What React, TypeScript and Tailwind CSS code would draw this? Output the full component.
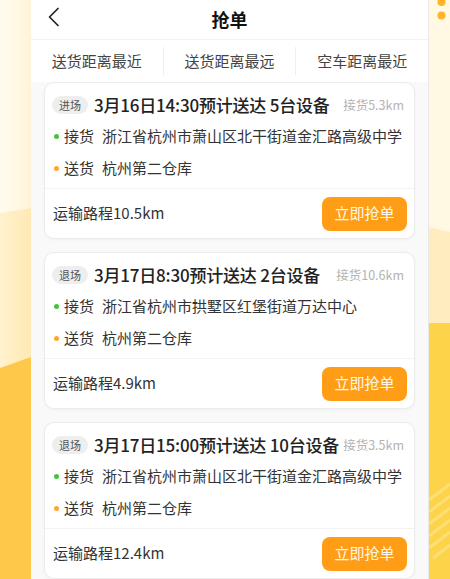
import React from 'react';

interface Order {
  tag: string;
  title: string;
  pickupDistance: string;
  pickup: string;
  dropoff: string;
  route: string;
}

const ORDERS: Order[] = [
  {
    tag: '进场',
    title: '3月16日14:30预计送达 5台设备',
    pickupDistance: '接货5.3km',
    pickup: '浙江省杭州市萧山区北干街道金汇路高级中学',
    dropoff: '杭州第二仓库',
    route: '运输路程10.5km',
  },
  {
    tag: '退场',
    title: '3月17日8:30预计送达 2台设备',
    pickupDistance: '接货10.6km',
    pickup: '浙江省杭州市拱墅区红堡街道万达中心',
    dropoff: '杭州第二仓库',
    route: '运输路程4.9km',
  },
  {
    tag: '退场',
    title: '3月17日15:00预计送达 10台设备',
    pickupDistance: '接货3.5km',
    pickup: '浙江省杭州市萧山区北干街道金汇路高级中学',
    dropoff: '杭州第二仓库',
    route: '运输路程12.4km',
  },
];

const TABS = ['送货距离最近', '送货距离最远', '空车距离最近'];

function LeftDecor() {
  return (
    <svg width="31" height="579" viewBox="0 0 31 579" className="block shrink-0">
      <defs>
        <linearGradient id="lcream" x1="0" x2="1" y1="0" y2="0">
          <stop offset="0" stopColor="#fffcee" />
          <stop offset="1" stopColor="#fff4d9" />
        </linearGradient>
        <linearGradient id="lband" x1="0" x2="1" y1="0" y2="0">
          <stop offset="0" stopColor="#fff2cf" />
          <stop offset="1" stopColor="#ffe9b4" />
        </linearGradient>
      </defs>
      <rect width="31" height="579" fill="url(#lcream)" />
      <polygon points="0,213 31,208 31,579 0,579" fill="url(#lband)" />
      <polygon points="0,368 31,357 31,579 0,579" fill="#fec84b" />
    </svg>
  );
}

function RightDecor() {
  return (
    <svg width="21" height="579" viewBox="0 0 21 579" className="block shrink-0">
      <rect width="21" height="579" fill="#fff8e3" />
      <polygon points="0,227 21,232 21,579 0,579" fill="#ffedbf" />
      <rect x="0" y="323" width="21" height="256" fill="#fdd449" />
      <g stroke="#ffffff" strokeOpacity="0.25" strokeWidth="3">
        <line x1="0" y1="500" x2="21" y2="484" />
        <line x1="0" y1="512" x2="21" y2="496" />
        <line x1="0" y1="524" x2="21" y2="508" />
        <line x1="0" y1="536" x2="21" y2="520" />
        <line x1="0" y1="548" x2="21" y2="532" />
        <line x1="4" y1="558" x2="21" y2="545" />
      </g>
      <circle cx="12.5" cy="2" r="4" fill="#ffb42a" />
      <circle cx="12.5" cy="15.5" r="4" fill="#ffb42a" />
    </svg>
  );
}

function OrderCard({ order }: { order: Order }) {
  return (
    <div className="shrink-0 bg-white rounded-[10px] border border-[#ececec] shadow-[0_1px_3px_rgba(0,0,0,0.04)]">
      <div className="pt-[11px] pb-[4px]">
        <div className="flex items-center h-[22px] pl-[7px] pr-[10px] whitespace-nowrap">
          <span className="shrink-0 h-[18px] px-[7px] rounded-full bg-[#eeeeee] text-[11px] leading-[18px] text-[#555]">
            {order.tag}
          </span>
          <span className="shrink-0 ml-[6px] text-[17px] font-medium tracking-[-0.2px] text-[#222]">{order.title}</span>
          <span className="shrink-0 ml-auto text-[12.5px] text-[#b3b3b3]">{order.pickupDistance}</span>
        </div>
        <div className="mt-[4px] flex items-center h-[32px] pl-[9px] whitespace-nowrap">
          <span className="shrink-0 w-[5px] h-[5px] rounded-full bg-[#45c43a]" />
          <span className="shrink-0 ml-[5px] text-[15px] text-[#333]">接货</span>
          <span className="ml-[8px] text-[15px] text-[#333]">{order.pickup}</span>
        </div>
        <div className="flex items-center h-[32px] pl-[9px] whitespace-nowrap">
          <span className="shrink-0 w-[5px] h-[5px] rounded-full bg-[#ffa630]" />
          <span className="shrink-0 ml-[5px] text-[15px] text-[#333]">送货</span>
          <span className="ml-[8px] text-[15px] text-[#333]">{order.dropoff}</span>
        </div>
      </div>
      <div className="flex items-center justify-between h-[50px] border-t border-[#f3f3f3] pl-[8px] pr-[7px]">
        <span className="text-[15px] text-[#333]">{order.route}</span>
        <button className="w-[85px] h-[34px] rounded-[8px] bg-[#ff9e16] text-[15px] text-[#fff7ea]">
          立即抢单
        </button>
      </div>
    </div>
  );
}

export default function App() {
  return (
    <div
      className="flex w-[450px] h-[579px] overflow-hidden bg-[#fff8e3]"
      style={{ fontFamily: '"Noto Sans CJK SC", "Noto Sans", sans-serif' }}
    >
      <LeftDecor />
      <div className="w-[398px] shrink-0 flex flex-col bg-[#f9f9f9] border-r border-[#e8e8e8]">
        <div className="relative h-[40px] shrink-0 bg-white border-b border-[#f2f2f2] flex items-center justify-center">
          <svg width="14" height="20" viewBox="0 0 14 20" className="absolute left-[16px] top-[7px]">
            <path d="M11 1.5 L2.5 10 L11 18.5" fill="none" stroke="#222" strokeWidth="1.7" strokeLinecap="round" strokeLinejoin="round" />
          </svg>
          <span className="text-[18px] font-bold text-[#111]">抢单</span>
        </div>
        <div className="h-[42px] shrink-0 bg-white flex items-center">
          {TABS.map((t, i) => (
            <div
              key={t}
              className={`flex-1 h-[28px] flex items-center justify-center text-[15px] text-[#444] ${i > 0 ? 'border-l border-[#efefef]' : ''}`}
            >
              {t}
            </div>
          ))}
        </div>
        <div className="flex flex-col gap-[13px] px-[13px]">
          {ORDERS.map((o, i) => (
            <OrderCard key={i} order={o} />
          ))}
        </div>
      </div>
      <RightDecor />
    </div>
  );
}
